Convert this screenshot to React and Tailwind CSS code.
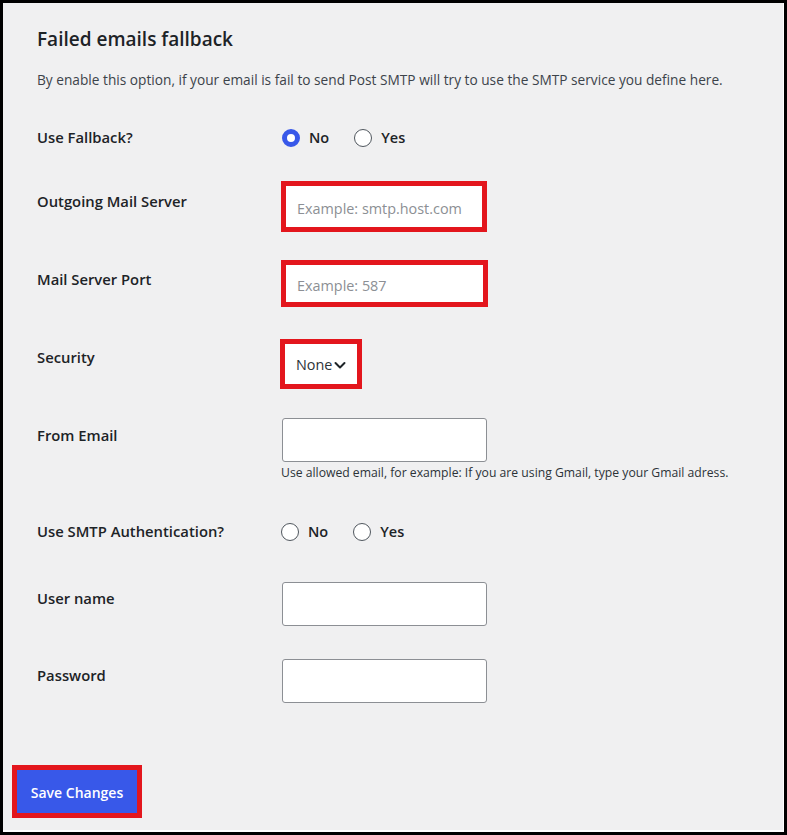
import React from "react";

const font = { fontFamily: '"Open Sans", "Noto Sans", "Liberation Sans", sans-serif' };

function Radio({ checked, label }) {
  return (
    <div className="flex items-center">
      {checked ? (
        <span className="w-[18px] h-[18px] rounded-full border-[5px] border-[#3858e9] bg-white box-border" />
      ) : (
        <span className="w-[18px] h-[18px] rounded-full border-[1.5px] border-[#50575e] bg-white box-border" />
      )}
      <span className="ml-[9px] text-[14.5px] font-semibold text-[#1d2327] leading-[20px]">{label}</span>
    </div>
  );
}

function Label({ children, pt }) {
  return (
    <div className={`w-[245px] shrink-0 text-[14.8px] font-semibold text-[#1d2327] leading-[20px] ${pt}`}>
      {children}
    </div>
  );
}

function Input() {
  return <div className="w-[205px] h-[44px] bg-white border border-[#8c8f94] rounded-[3px]" />;
}

export default function App() {
  return (
    <div style={font} className="w-[787px] h-[835px] bg-black pt-[3px] pl-[3px] pr-[3px] pb-[3px]">
      <div className="w-full h-full bg-[#f0f0f1] border-r-[1px] border-b-[2px] border-white flex flex-col">
        <div className="pl-[34px]">
          <h2 className="mt-[24px] text-[19px] leading-[24px] font-semibold text-[#1d2327]">Failed emails fallback</h2>
          <p className="mt-[20px] text-[13.7px] leading-[18px] text-[#3c434a]">
            By enable this option, if your email is fail to send Post SMTP will try to use the SMTP service you define here.
          </p>

          <div className="mt-[38px] flex">
            <Label pt="pt-0">Use Fallback?</Label>
            <div className="flex items-center gap-[25px] h-[20px] mt-[1px]">
              <Radio checked label="No" />
              <Radio label="Yes" />
            </div>
          </div>

          <div className="mt-[33px] flex">
            <Label pt="pt-[10px]">Outgoing Mail Server</Label>
            <div className="-ml-[1px] w-[206px] h-[51px] bg-white border-[5px] border-[#e3161d] flex items-center pl-[11px] pt-[5px] text-[14.4px] text-[#8c8f94]">
              Example: smtp.host.com
            </div>
          </div>

          <div className="mt-[28px] flex">
            <Label pt="pt-[9px]">Mail Server Port</Label>
            <div className="-ml-[1px] w-[207px] h-[47px] bg-white border-[5px] border-[#e3161d] flex items-center pl-[11px] pt-[5px] text-[14.4px] text-[#8c8f94]">
              Example: 587
            </div>
          </div>

          <div className="mt-[32px] flex">
            <Label pt="pt-[8px]">Security</Label>
            <div className="-ml-[2px] w-[82px] h-[50px] bg-white border-[5px] border-[#e3161d] flex items-center pl-[11px] pt-[1px] text-[14.4px] text-[#2c3338]">
              <span>None</span>
              <svg width="12" height="12" viewBox="0 0 12 12" className="ml-[2px] mt-[1px]">
                <path d="M1.5 4 L6 8.5 L10.5 4" fill="none" stroke="#1d2327" strokeWidth="2" strokeLinecap="round" strokeLinejoin="round" />
              </svg>
            </div>
          </div>

          <div className="mt-[29px] flex">
            <Label pt="pt-[7px]">From Email</Label>
            <div className="flex flex-col">
              <Input />
              <p className="mt-[3px] -ml-[1px] text-[12.2px] leading-[16px] text-[#2c3338]">
                Use allowed email, for example: If you are using Gmail, type your Gmail adress.
              </p>
            </div>
          </div>

          <div className="mt-[40px] flex">
            <Label pt="pt-0">Use SMTP Authentication?</Label>
            <div className="flex items-center gap-[25px] h-[20px] mt-[1px] -ml-[1px]">
              <Radio label="No" />
              <Radio label="Yes" />
            </div>
          </div>

          <div className="mt-[40px] flex">
            <Label pt="pt-[6px]">User name</Label>
            <Input />
          </div>

          <div className="mt-[33px] flex">
            <Label pt="pt-[6px]">Password</Label>
            <Input />
          </div>
        </div>

        <div className="pl-[9px] mt-[62px]">
          <button className="w-[130px] h-[53px] bg-[#3858e9] border-[5px] border-[#e3161d] text-white text-[14px] font-semibold flex items-center justify-center pt-[1px]">
            Save Changes
          </button>
        </div>
      </div>
    </div>
  );
}
